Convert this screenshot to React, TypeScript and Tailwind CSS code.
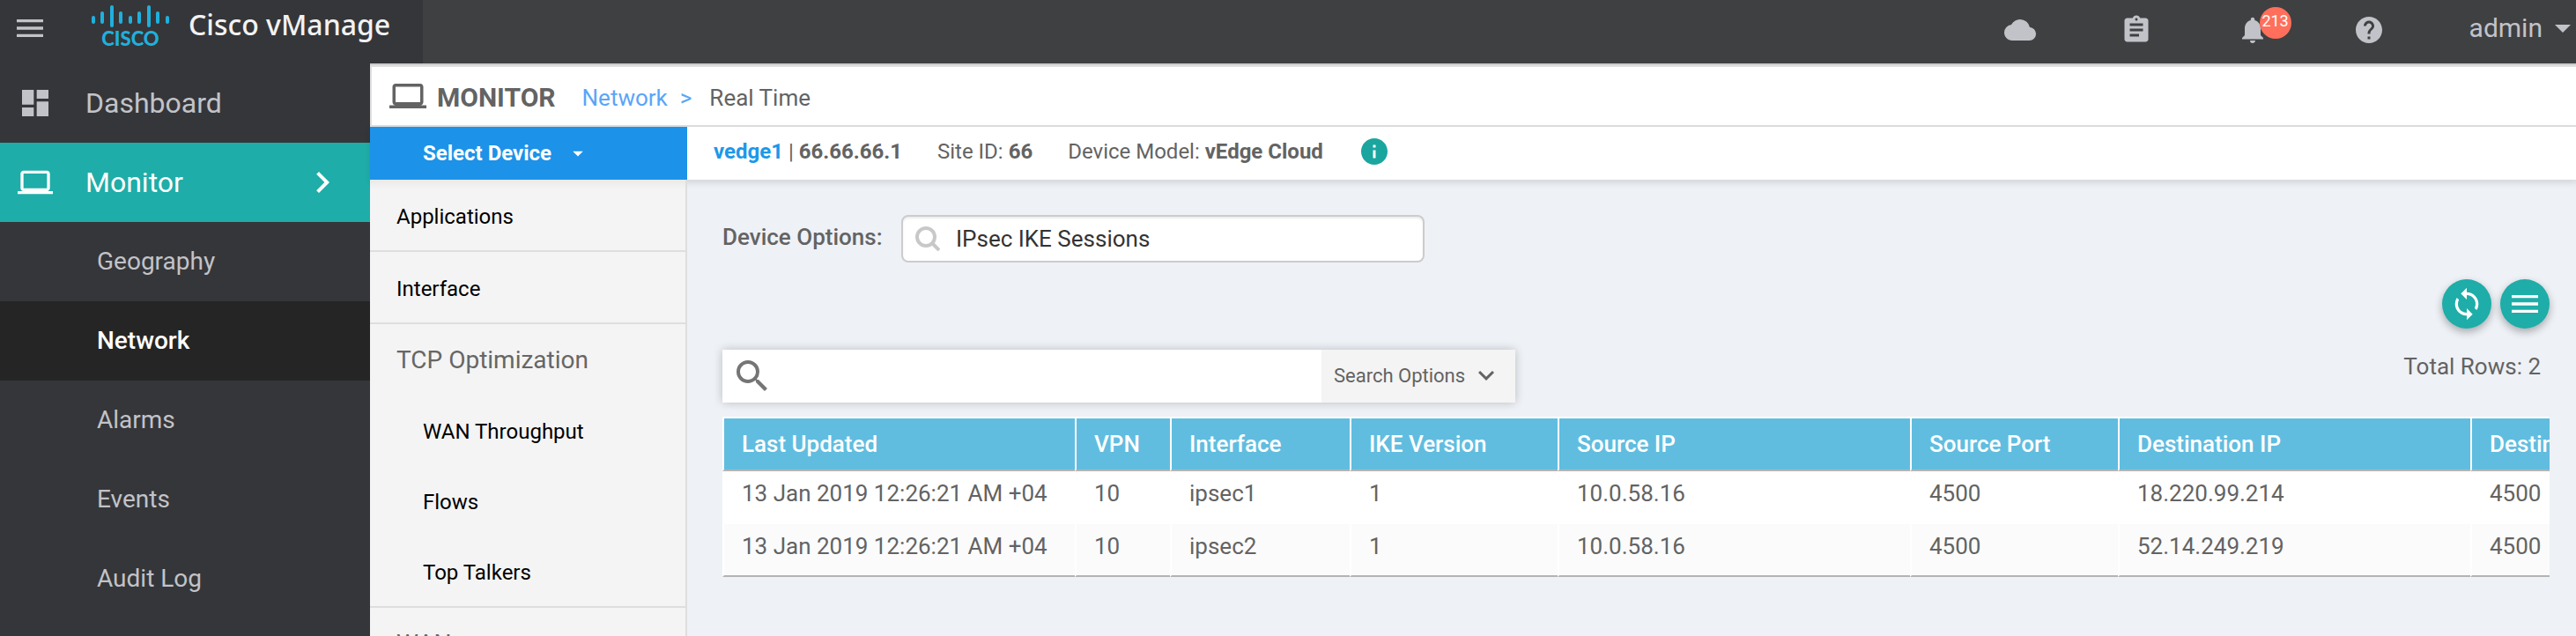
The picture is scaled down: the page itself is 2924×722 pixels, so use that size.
import type { ComponentType } from "react";
import {
  MdArrowDropDown,
  MdAssignment,
  MdChevronRight,
  MdCloud,
  MdDashboard,
  MdExpandMore,
  MdHelp,
  MdInfo,
  MdLaptop,
  MdMenu,
  MdNotifications,
  MdSearch,
  MdSync,
} from "react-icons/md";

const columns = [
  { key: "updated", label: "Last Updated", width: "w-[400px]" },
  { key: "vpn", label: "VPN", width: "w-[108px]" },
  { key: "iface", label: "Interface", width: "w-[204px]" },
  { key: "ike", label: "IKE Version", width: "w-[236px]" },
  { key: "src", label: "Source IP", width: "w-[400px]" },
  { key: "srcPort", label: "Source Port", width: "w-[236px]" },
  { key: "dst", label: "Destination IP", width: "w-[400px]" },
  { key: "dstPort", label: "Destination Port", width: "w-[300px]" },
] as const;

type Row = Record<(typeof columns)[number]["key"], string>;

const rows: Row[] = [
  { updated: "13 Jan 2019 12:26:21 AM +04", vpn: "10", iface: "ipsec1", ike: "1", src: "10.0.58.16", srcPort: "4500", dst: "18.220.99.214", dstPort: "4500" },
  { updated: "13 Jan 2019 12:26:21 AM +04", vpn: "10", iface: "ipsec2", ike: "1", src: "10.0.58.16", srcPort: "4500", dst: "52.14.249.219", dstPort: "4500" },
];

function CiscoLogo() {
  const bars = [
    [2, 15, 22], [12, 10, 22], [23, 3, 26], [33, 10, 22], [44, 15, 22],
    [54, 10, 22], [65, 3, 26], [75, 10, 22], [86, 15, 22],
  ];
  return (
    <svg viewBox="0 0 88 56" className="h-14 w-[88px]" role="img" aria-label="Cisco">
      {bars.map(([x, y1, y2]) => (
        <line key={x} x1={x} x2={x} y1={y1 + 1} y2={y2 - 1} stroke="#1fb0dd" strokeWidth="4" strokeLinecap="round" />
      ))}
      <text x="44" y="48" textAnchor="middle" fill="#1fb0dd" fontFamily="Lato, sans-serif" fontWeight="900" fontSize="22">
        CISCO
      </text>
    </svg>
  );
}

function TopBar() {
  return (
    <header className="flex h-[72px] shrink-0 bg-[#3f4042] text-[#c2c3c8]">
      <div className="flex w-[480px] shrink-0 bg-[#353639] pl-[14px]">
        <button aria-label="Toggle menu" className="mt-3 size-10 shrink-0">
          <MdMenu className="size-10" />
        </button>
        <div className="ml-[50px] mt-1 shrink-0">
          <CiscoLogo />
        </div>
        <span className="ml-[22px] whitespace-nowrap font-['Noto_Sans',sans-serif] text-[32px]/[56px] font-medium text-[#f2f2f2]">Cisco vManage</span>
      </div>
      <div className="flex grow items-start justify-end pr-[6px] pt-4">
        <div className="mr-24 flex gap-24">
          <button aria-label="Cloud"><MdCloud className="size-9" /></button>
          <button aria-label="Tasks"><MdAssignment className="size-9" /></button>
          <button aria-label="Alarms, 213 new" className="relative">
            <MdNotifications className="size-9" />
            <span className="absolute -top-2 left-[26px] size-9 rounded-full bg-[#ff6f5b] text-center text-[18px]/[32px] text-white">213</span>
          </button>
          <button aria-label="Help"><MdHelp className="size-9" /></button>
        </div>
        <button className="flex items-center gap-[14px] text-[30px]/[32px]">
          admin
          <svg viewBox="0 0 18 9" className="h-[9px] w-[18px] fill-current"><path d="M0 0h18L9 9z" /></svg>
        </button>
      </div>
    </header>
  );
}

function NavItem({ label, icon: Icon, active }: { label: string; icon: ComponentType<{ className?: string }>; active?: boolean }) {
  return (
    <a href="#" className={`flex h-[90px] items-center pl-5 pr-[30px] text-[32px] ${active ? "bg-[#1eada8] text-white" : "text-[#c2c3c8]"}`}>
      <Icon className="size-10" />
      <span className="ml-[37px] grow">{label}</span>
      {active && <MdChevronRight className="size-12" />}
    </a>
  );
}

function MainNav() {
  return (
    <nav className="w-[420px] shrink-0 bg-[#353639]">
      <NavItem label="Dashboard" icon={MdDashboard} />
      <NavItem label="Monitor" icon={MdLaptop} active />
      {["Geography", "Network", "Alarms", "Events", "Audit Log"].map((label) => (
        <a
          key={label}
          href="#"
          className={`flex h-[90px] items-center pl-[110px] text-[28px] ${label === "Network" ? "bg-[#252525] font-medium text-white" : "text-[#c2c3c8]"}`}
        >
          {label}
        </a>
      ))}
    </nav>
  );
}

function DeviceMenu() {
  const link = "flex h-[82px] items-center border-b-2 border-[#dedede] pl-[30px] pt-1 text-[24px] text-black";
  const heading = "flex h-20 items-center pl-[30px] pt-[2px] text-[28px] text-[#666]";
  return (
    <aside className="w-[360px] shrink-0 border-r-2 border-[#dedede] bg-[#f4f4f4] shadow-[inset_0_12px_10px_-8px_rgba(0,0,0,0.06)]">
      <a href="#" className={link}>Applications</a>
      <a href="#" className={link}>Interface</a>
      <section className="border-b-2 border-[#dedede]">
        <h3 className={heading}>TCP Optimization</h3>
        {["WAN Throughput", "Flows", "Top Talkers"].map((label) => (
          <a key={label} href="#" className="flex h-20 items-center pl-[60px] pt-1 text-[24px] text-black">{label}</a>
        ))}
      </section>
      <h3 className={heading}>WAN</h3>
    </aside>
  );
}

function SessionsTable() {
  return (
    <div className="mt-4 overflow-hidden">
      <table className="w-[2284px] table-fixed border-separate border-spacing-0 text-left text-[26px]">
        <thead>
          <tr>
            {columns.map((c) => (
              <th key={c.key} className={`${c.width} h-[62px] whitespace-nowrap border-y-2 border-l-2 border-t-white border-l-white border-b-[#b4b4b4] bg-[#61bddf] pl-5 font-medium text-white`}>
                {c.label}
              </th>
            ))}
          </tr>
        </thead>
        <tbody className="text-[#636363]">
          {rows.map((row, i) => (
            <tr key={row.iface}>
              {columns.map((c) => (
                <td
                  key={c.key}
                  className={`h-[60px] whitespace-nowrap border-l-2 border-l-white pl-5 ${i === rows.length - 1 ? "border-b-2 border-b-[#b4b4b4] bg-[#fbfbfb] pb-2" : "bg-white pb-[10px]"}`}
                >
                  {row[c.key]}
                </td>
              ))}
            </tr>
          ))}
        </tbody>
      </table>
    </div>
  );
}

function RealTimePanel() {
  const round = "flex size-14 items-center justify-center rounded-full bg-[#1eada8] text-white shadow-[0_4px_10px_rgba(0,0,0,0.3)]";
  return (
    <section className="min-w-0 grow pl-10 pr-[30px] pt-10 shadow-[inset_0_12px_10px_-8px_rgba(0,0,0,0.06)]">
      <div className="flex items-start">
        <label htmlFor="device-options" className="w-[203px] shrink-0 text-[26px]/[50px] font-medium text-[#636363]">Device Options:</label>
        <div className="flex h-[54px] w-[594px] items-center rounded-lg border-2 border-[#ccc] bg-white pl-[14px] shadow-[inset_0_2px_2px_rgba(0,0,0,0.08)]">
          <svg viewBox="0 0 28 28" className="size-7 shrink-0" fill="none" stroke="#c8c8c8" strokeWidth="4">
            <circle cx="12" cy="12" r="10" />
            <path d="M19 19l8 8" />
          </svg>
          <input id="device-options" defaultValue="IPsec IKE Sessions" className="ml-[18px] w-full min-w-0 bg-transparent text-[26px] text-[#333] outline-none" />
        </div>
      </div>
      <div className="mt-[19px] flex justify-end gap-[10px]">
        <button aria-label="Refresh" className={round}><MdSync className="size-10" /></button>
        <button aria-label="Table menu" className={round}><MdMenu className="size-10" /></button>
      </div>
      <div className="mt-6 flex items-start justify-between">
        <div className="flex h-[60px] w-[900px] bg-white shadow-[0_0_10px_rgba(0,0,0,0.22)]">
          <label className="flex grow items-center pl-[10px] text-[#757575]">
            <MdSearch className="size-12" />
            <input type="search" aria-label="Search" className="h-full grow bg-transparent px-2 text-[26px] outline-none" />
          </label>
          <button className="flex w-[220px] items-center bg-[#f4f4f4] pb-[2px] pl-[14px] text-[22px] text-[#636363]">
            Search Options
            <MdExpandMore className="ml-[6px] size-9" />
          </button>
        </div>
        <p className="pr-[10px] text-[26px]/[38px] text-[#636363]">Total Rows: 2</p>
      </div>
      <SessionsTable />
    </section>
  );
}

export default function App() {
  return (
    <div className="flex h-screen flex-col overflow-hidden bg-[#eef1f6] font-[Roboto,sans-serif]">
      <TopBar />
      <div className="flex min-h-0 grow">
        <MainNav />
        <main className="flex min-w-0 grow flex-col">
          <div className="shrink-0 border-t-2 border-[#ccc]">
            <div className="flex h-[70px] items-center border-2 border-r-0 border-[#e0e0e0] bg-white pl-5 text-[26px] text-[#636363]">
              <MdLaptop className="size-[42px]" />
              <h1 className="ml-3 pt-[2px] text-[30px] font-bold">MONITOR</h1>
              <a href="#" className="ml-[30px] pt-1 text-[#5aa5f8]">Network</a>
              <span className="ml-[14px] pt-1 text-[#5aa5f8]">&gt;</span>
              <span className="ml-5 pt-1">Real Time</span>
            </div>
          </div>
          <div className="flex h-[60px] shrink-0 text-[24px] shadow-[0_2px_8px_rgba(0,0,0,0.08)]">
            <button className="flex w-[360px] items-center bg-[#1c92e8] pl-[60px] font-bold text-white">
              Select Device
              <MdArrowDropDown className="ml-4 size-7" />
            </button>
            <div className="flex grow items-center bg-white pb-1 pl-[30px] text-[#636363]">
              <p className="whitespace-pre"><a href="#" className="font-bold text-[#1c98ea]">vedge1</a> | <b>66.66.66.1</b></p>
              <p className="ml-10">Site ID: <b>66</b></p>
              <p className="ml-10">Device Model: <b>vEdge Cloud</b></p>
              <button aria-label="Device details" className="ml-10 text-[#1ba59f]"><MdInfo className="size-9" /></button>
            </div>
          </div>
          <div className="flex min-h-0 grow">
            <DeviceMenu />
            <RealTimePanel />
          </div>
        </main>
      </div>
    </div>
  );
}
